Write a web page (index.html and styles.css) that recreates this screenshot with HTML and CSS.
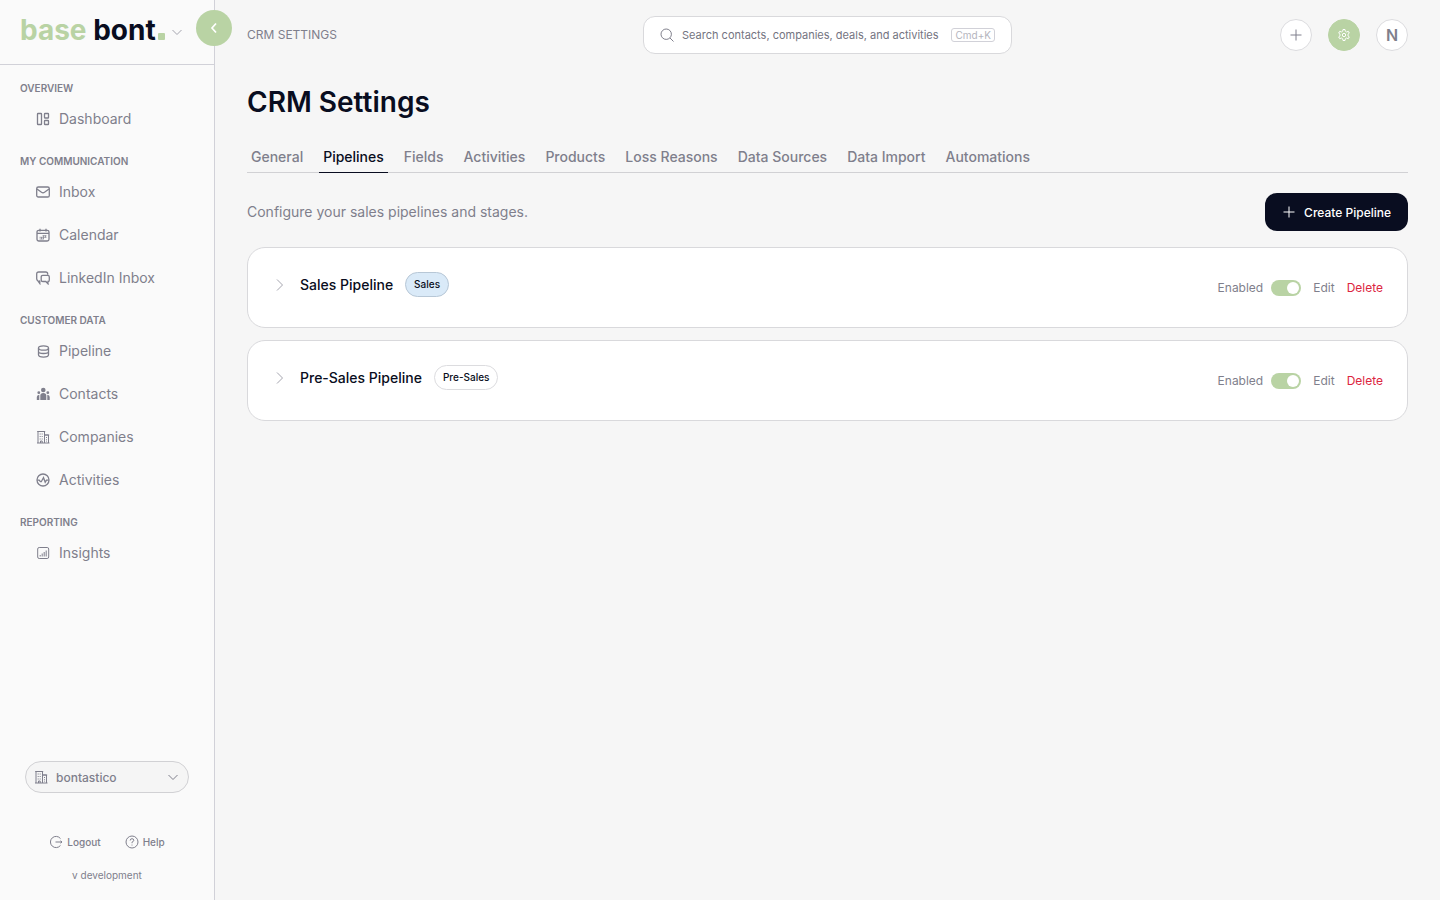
FILE: index.html
```html
<!DOCTYPE html>
<html lang="en">

<head>
    <meta charset="UTF-8">
    <meta name="viewport" content="width=device-width, initial-scale=1.0">
    <title>CRM Settings</title>
    <link rel="stylesheet" href="styles.css">
</head>

<body>
    <!-- shared icons -->
    <svg class="sprite" aria-hidden="true">
        <symbol id="chevron-down" viewBox="0 0 14 14">
            <path d="M2.5 5 7 9.5 11.5 5" />
        </symbol>
        <symbol id="chevron-right" viewBox="0 0 14 14">
            <path d="M4 1.5 9.5 7 4 12.5" />
        </symbol>
        <symbol id="plus" viewBox="0 0 14 14">
            <path d="M7 1.5v11M1.5 7h11" />
        </symbol>
        <symbol id="building" viewBox="0 0 14 14">
            <path d="M1 13h12.500M2 13V1.500h6.500V13M8.500 5h4v8M1.200 1.500h8M8.500 5h4.700" />
            <path d="M4.200 3.500v1M6.200 3.500v1M4.200 6v1M6.200 6v1M4.200 8.500v1M6.200 8.500v1M4.500 13v-2h1.700v2M10.500 7v1M10.500 9.300v1M10.500 11.500v.5" />
        </symbol>
    </svg>

    <div class="layout">
        <aside class="sidebar">
            <div class="brand">
                <a class="logo" href="#"><span class="logo-light">base</span> bont<span class="logo-dot"></span></a>
                <svg class="icon brand-arrow"><use href="#chevron-down" /></svg>
                <button class="collapse" type="button" aria-label="Collapse sidebar">
                    <svg viewBox="0 0 14 14"><path d="M9 2.500 5 7l4 4.500" /></svg>
                </button>
            </div>

            <nav class="nav">
                <h2 class="nav-title">OVERVIEW</h2>
                <ul class="nav-list">
                    <li><a class="nav-link" href="#">
                        <svg class="icon" viewBox="0 0 14 14"><rect x="1.500" y="1.500" width="4" height="11" rx=".6" /><rect x="8.500" y="1.500" width="4" height="4.500" rx=".6" /><rect x="8.500" y="8.500" width="4" height="4" rx=".6" /></svg>
                        Dashboard</a></li>
                </ul>

                <h2 class="nav-title">MY COMMUNICATION</h2>
                <ul class="nav-list">
                    <li><a class="nav-link" href="#">
                        <svg class="icon" viewBox="0 0 14 14"><rect x=".7" y="2" width="12.600" height="10" rx="1.600" /><path d="m1 4 4.500 3.300q1.500 1 3 0L13 4" /></svg>
                        Inbox</a></li>
                    <li><a class="nav-link" href="#">
                        <svg class="icon" viewBox="0 0 14 14"><rect x="1" y="2.300" width="12" height="10.700" rx="1.800" /><path d="M1 5.300h12M4 .8v2.700M10 .8v2.700" /><path d="M6.500 7.700h4M3.500 9.300h7M3.500 11h4.500M5.500 9v2.200M7.500 7.500V11M9.500 7.500v2" stroke-width=".7" /></svg>
                        Calendar</a></li>
                    <li><a class="nav-link" href="#">
                        <svg class="icon" viewBox="0 0 14 14"><path d="M4.300 10H3.800v2.500L1.700 9.600Q.7 9 .7 7.800V3Q.7 1 2.700 1h7q2 0 2 2v.8" /><path d="M6.800 4.300h4.900q1.600 0 1.600 1.600v3q0 1.600-1.300 1.600v2.300l-2.200-2.300h-3q-1.600 0-1.600-1.600v-3q0-1.600 1.600-1.600z" /></svg>
                        LinkedIn Inbox</a></li>
                </ul>

                <h2 class="nav-title">CUSTOMER DATA</h2>
                <ul class="nav-list">
                    <li><a class="nav-link" href="#">
                        <svg class="icon" viewBox="0 0 14 14"><ellipse cx="7.500" cy="4" rx="5" ry="2.200" /><path d="M2.500 4v6.800c0 3 10 3 10 0V4M2.500 7.400c0 2.800 10 2.800 10 0" /></svg>
                        Pipeline</a></li>
                    <li><a class="nav-link" href="#">
                        <svg class="icon icon-solid" viewBox="0 0 14 14"><circle cx="7.300" cy="3" r="2.300" /><circle cx="2.800" cy="5.700" r="1.400" /><circle cx="11.800" cy="5.700" r="1.400" /><path d="M4.300 13V8.500q0-2.500 3-2.500t3 2.500V13zM.8 13v-3q0-2 2.500-2.200V13zM13.700 13v-3q0-2-2.400-2.200V13z" /></svg>
                        Contacts</a></li>
                    <li><a class="nav-link" href="#">
                        <svg class="icon icon-fine"><use href="#building" /></svg>
                        Companies</a></li>
                    <li><a class="nav-link" href="#">
                        <svg class="icon" viewBox="0 0 14 14"><circle cx="7" cy="7" r="6" /><path d="M1.200 7.200h2l1.300 1.500h.8l2.200-4.200 1.700 4.700 1.300-2h2.300" /></svg>
                        Activities</a></li>
                </ul>

                <h2 class="nav-title">REPORTING</h2>
                <ul class="nav-list">
                    <li><a class="nav-link" href="#">
                        <svg class="icon icon-fine" viewBox="0 0 14 14"><rect x="1.700" y="1.500" width="11" height="11" rx="1.500" /><path d="M4.200 9v1.500M6.200 7.500v3M8.200 6v4.500M10.200 4.500v6" /></svg>
                        Insights</a></li>
                </ul>
            </nav>

            <div class="sidebar-bottom">
                <div class="workspace">
                    <svg class="icon"><use href="#building" /></svg>
                    <select class="workspace-select" aria-label="Workspace">
                        <option>bontastico</option>
                    </select>
                    <svg class="icon workspace-arrow"><use href="#chevron-down" /></svg>
                </div>
                <div class="foot-links">
                    <a class="foot-link" href="#">
                        <svg class="icon" viewBox="0 0 14 14"><path d="M11.500 3.600A5.600 5.600 0 1 0 11.500 10.400M6.500 7h6.500M11.500 5.800 13 7l-1.500 1.200" /></svg>
                        Logout</a>
                    <a class="foot-link" href="#">
                        <svg class="icon" viewBox="0 0 14 14"><circle cx="7" cy="7" r="6" /><path d="M5.200 5.500q0-1.800 1.800-1.800t1.800 1.600Q8.800 6.400 7 7.200v1M7 9.600v.9" /></svg>
                        Help</a>
                </div>
                <p class="version">v development</p>
            </div>
        </aside>

        <main class="main">
            <header class="topbar">
                <span class="crumb">CRM SETTINGS</span>
                <label class="search">
                    <svg class="icon" viewBox="0 0 14 14"><circle cx="6.200" cy="6.200" r="5.200" /><path d="m10 10 3.500 3.500" /></svg>
                    <input class="search-input" type="text" aria-label="Search" placeholder="Search contacts, companies, deals, and activities">
                    <kbd class="search-key">Cmd+K</kbd>
                </label>
                <div class="actions">
                    <button class="round" type="button" aria-label="Add"><svg class="icon"><use href="#plus" /></svg></button>
                    <button class="round round-green" type="button" aria-label="Settings">
                        <svg class="icon" viewBox="0 0 14 14"><path d="M5.700 3.200 6 1.500h2l.3 1.700 1.300.8 1.700-.7 1 1.800L11 6.200v1.600l1.300 1.100-1 1.800-1.700-.7-1.300.8L8 12.500H6l-.3-1.700-1.300-.8-1.700.7-1-1.800L3 7.800V6.200L1.700 5.100l1-1.800 1.700.7z" /><circle cx="7" cy="7" r="1.700" /></svg>
                    </button>
                    <button class="round avatar" type="button">N</button>
                </div>
            </header>

            <h1 class="page-title">CRM Settings</h1>

            <nav class="tabs">
                <a class="tab" href="#">General</a>
                <a class="tab tab-active" href="#">Pipelines</a>
                <a class="tab" href="#">Fields</a>
                <a class="tab" href="#">Activities</a>
                <a class="tab" href="#">Products</a>
                <a class="tab" href="#">Loss Reasons</a>
                <a class="tab" href="#">Data Sources</a>
                <a class="tab" href="#">Data Import</a>
                <a class="tab" href="#">Automations</a>
            </nav>

            <div class="intro">
                <p class="intro-text">Configure your sales pipelines and stages.</p>
                <button class="create" type="button"><svg class="icon"><use href="#plus" /></svg>Create Pipeline</button>
            </div>

            <div class="cards">
                <section class="card">
                    <div class="card-head">
                        <button class="expand" type="button" aria-label="Expand Sales Pipeline"><svg class="icon"><use href="#chevron-right" /></svg></button>
                        <h3 class="card-title">Sales Pipeline</h3>
                        <span class="badge badge-blue">Sales</span>
                    </div>
                    <div class="card-actions">
                        <label class="toggle">Enabled <input type="checkbox" role="switch" checked></label>
                        <button class="link" type="button">Edit</button>
                        <button class="link link-red" type="button">Delete</button>
                    </div>
                </section>
                <section class="card">
                    <div class="card-head">
                        <button class="expand" type="button" aria-label="Expand Pre-Sales Pipeline"><svg class="icon"><use href="#chevron-right" /></svg></button>
                        <h3 class="card-title">Pre-Sales Pipeline</h3>
                        <span class="badge">Pre-Sales</span>
                    </div>
                    <div class="card-actions">
                        <label class="toggle">Enabled <input type="checkbox" role="switch" checked></label>
                        <button class="link" type="button">Edit</button>
                        <button class="link link-red" type="button">Delete</button>
                    </div>
                </section>
            </div>
        </main>
    </div>
</body>

</html>
```
FILE: styles.css
```css
* {
    box-sizing: border-box;
}

body {
    margin: 0;
    background-color: #f6f6f6;
    color: #7f7f8c;
    font-family: Inter, "Liberation Sans", sans-serif;
    font-size: 14px;
    line-height: 20px;
}

h1,
h2,
h3,
p,
ul {
    margin: 0;
    padding: 0;
}

ul {
    list-style: none;
}

a {
    color: inherit;
    text-decoration: none;
}

button,
input,
select {
    font-family: inherit;
    color: inherit;
    margin: 0;
}

button {
    padding: 0;
    border: none;
    background: none;
    cursor: pointer;
}

.sprite {
    display: none;
}

.icon {
    flex: none;
    width: 14px;
    height: 14px;
    fill: none;
    stroke: currentColor;
    stroke-width: 1;
}

.layout {
    display: flex;
    min-height: 100vh;
}

/* sidebar */
.sidebar {
    flex: none;
    display: flex;
    flex-direction: column;
    width: 215px;
    background-color: #fafafa;
    border-right: 1px solid #d1d1d8;
}

.brand {
    position: relative;
    display: flex;
    align-items: center;
    gap: 5px;
    height: 65px;
    padding: 0 20px;
    border-bottom: 1px solid #d1d1d8;
}

.brand-arrow {
    color: #a5a5af;
}

.logo {
    padding-bottom: 4px;
    color: #090d20;
    font-size: 28px;
    font-weight: 700;
    line-height: 36px;
    white-space: nowrap;
}

.logo-light {
    color: #b9d3a4;
}

.logo-dot {
    display: inline-block;
    width: 7px;
    height: 7px;
    margin-left: 2px;
    border-radius: 1px;
    background-color: #b9d3a4;
}

.collapse {
    position: absolute;
    top: 10px;
    right: -18px;
    display: flex;
    align-items: center;
    justify-content: center;
    width: 36px;
    height: 36px;
    border-radius: 50%;
    background-color: #b9d3a4;
}

.collapse svg {
    width: 14px;
    height: 14px;
    fill: none;
    stroke: #fff;
    stroke-width: 1.7;
}

.nav {
    flex: 1;
    padding: 13px 20px;
}

.nav-title {
    font-size: 10px;
    font-weight: 600;
    line-height: 20px;
}

.nav-list {
    display: flex;
    flex-direction: column;
    gap: 9px;
    padding: 4px 0 15px 16px;
}

.nav-link {
    display: flex;
    align-items: center;
    gap: 9px;
    height: 34px;
}

.nav .icon {
    stroke-width: 1.3;
}

.nav .icon-fine {
    stroke-width: 1;
}

.nav .icon-solid {
    fill: currentColor;
    stroke: none;
}

.sidebar-bottom {
    display: flex;
    flex-direction: column;
    align-items: center;
    padding: 0 25px 15px;
}

.workspace {
    display: flex;
    align-items: center;
    gap: 8px;
    width: 100%;
    height: 32px;
    padding: 0 8px;
    border: 1px solid #d1d1d4;
    border-radius: 16px;
    background-color: #f5f5f5;
}

.workspace-select {
    flex: 1;
    min-width: 0;
    padding: 0;
    border: none;
    background: none;
    appearance: none;
    font-size: 12px;
    font-weight: 500;
}

.workspace-arrow {
    pointer-events: none;
}

.foot-links {
    display: flex;
    gap: 24px;
    margin-top: 39px;
    font-size: 10px;
    font-weight: 500;
}

.foot-link {
    display: flex;
    align-items: center;
    gap: 4px;
}

.version {
    margin-top: 13px;
    font-size: 10px;
}

/* main area */
.main {
    flex: 1;
    min-width: 0;
    padding: 16px 32px;
}

.topbar {
    display: grid;
    grid-template-columns: 1fr minmax(0, 369px) 1fr;
    align-items: center;
}

.crumb {
    font-size: 12px;
}

.search {
    display: flex;
    align-items: center;
    gap: 8px;
    height: 38px;
    padding: 0 16px;
    border: 1px solid #d9d9dc;
    border-radius: 12px;
    background-color: #fff;
}

.search-input {
    flex: 1;
    min-width: 0;
    padding: 0;
    border: none;
    outline: none;
    background: none;
    font-size: 11px;
}

.search-input::placeholder {
    color: #747481;
    opacity: 1;
}

.search-key {
    padding: 0 3px;
    border: 1px solid #d1d1d8;
    border-radius: 3px;
    color: #b4b4bd;
    font-family: inherit;
    font-size: 10px;
    line-height: 12px;
}

.actions {
    display: flex;
    justify-content: flex-end;
    gap: 16px;
}

.round {
    display: flex;
    align-items: center;
    justify-content: center;
    width: 32px;
    height: 32px;
    border: 1px solid #dcdcdf;
    border-radius: 50%;
    background-color: #fff;
}

.round-green {
    border-color: #b9d3a4;
    background-color: #b9d3a4;
    color: #fff;
}

.avatar {
    font-size: 16px;
    font-weight: 600;
}

.page-title {
    margin-top: 30px;
    color: #090d20;
    font-size: 28px;
    font-weight: 600;
    line-height: 36px;
}

.tabs {
    display: flex;
    gap: 12px;
    margin-top: 22px;
    border-bottom: 1px solid #d1d1d4;
}

.tab {
    margin-bottom: -1px;
    padding: 5px 4px;
    border-bottom: 1px solid transparent;
    font-weight: 500;
}

.tab-active {
    border-color: #090d20;
    color: #090d20;
}

.intro {
    display: flex;
    align-items: center;
    justify-content: space-between;
    margin: 20px 0 16px;
}

.create {
    display: flex;
    align-items: center;
    gap: 8px;
    height: 38px;
    padding: 0 17px;
    border-radius: 12px;
    background-color: #090d20;
    color: #fff;
    font-size: 12px;
    font-weight: 500;
}

.cards {
    display: flex;
    flex-direction: column;
    gap: 12px;
}

.card {
    display: flex;
    align-items: center;
    justify-content: space-between;
    padding: 24px;
    border: 1px solid #d9d9dc;
    border-radius: 18px;
    background-color: #fff;
}

.card-head {
    display: flex;
    align-items: center;
    gap: 12px;
    padding-bottom: 6px;
}

.expand {
    display: flex;
    align-items: center;
    justify-content: center;
    width: 16px;
    height: 16px;
    color: #a5a5af;
}

.card-title {
    color: #090d20;
    font-size: 14px;
    font-weight: 500;
}

.badge {
    padding: 0 8px;
    border: 1px solid #dcdcdf;
    border-radius: 13px;
    color: #090d20;
    font-size: 10px;
    font-weight: 500;
    line-height: 23px;
}

.badge-blue {
    border-color: #b7c7d6;
    background-color: #daeaf8;
}

.card-actions {
    display: flex;
    align-items: center;
    gap: 12px;
    font-size: 12px;
}

.toggle {
    display: flex;
    align-items: center;
    gap: 8px;
}

.toggle input {
    display: flex;
    align-items: center;
    justify-content: flex-end;
    width: 30px;
    height: 16px;
    padding: 2px;
    border-radius: 8px;
    background-color: #b9d3a4;
    appearance: none;
}

.toggle input::before {
    content: "";
    width: 12px;
    height: 12px;
    border-radius: 50%;
    background-color: #fff;
}

.link {
    font-size: 12px;
}

.link-red {
    color: #dc2640;
}
```
